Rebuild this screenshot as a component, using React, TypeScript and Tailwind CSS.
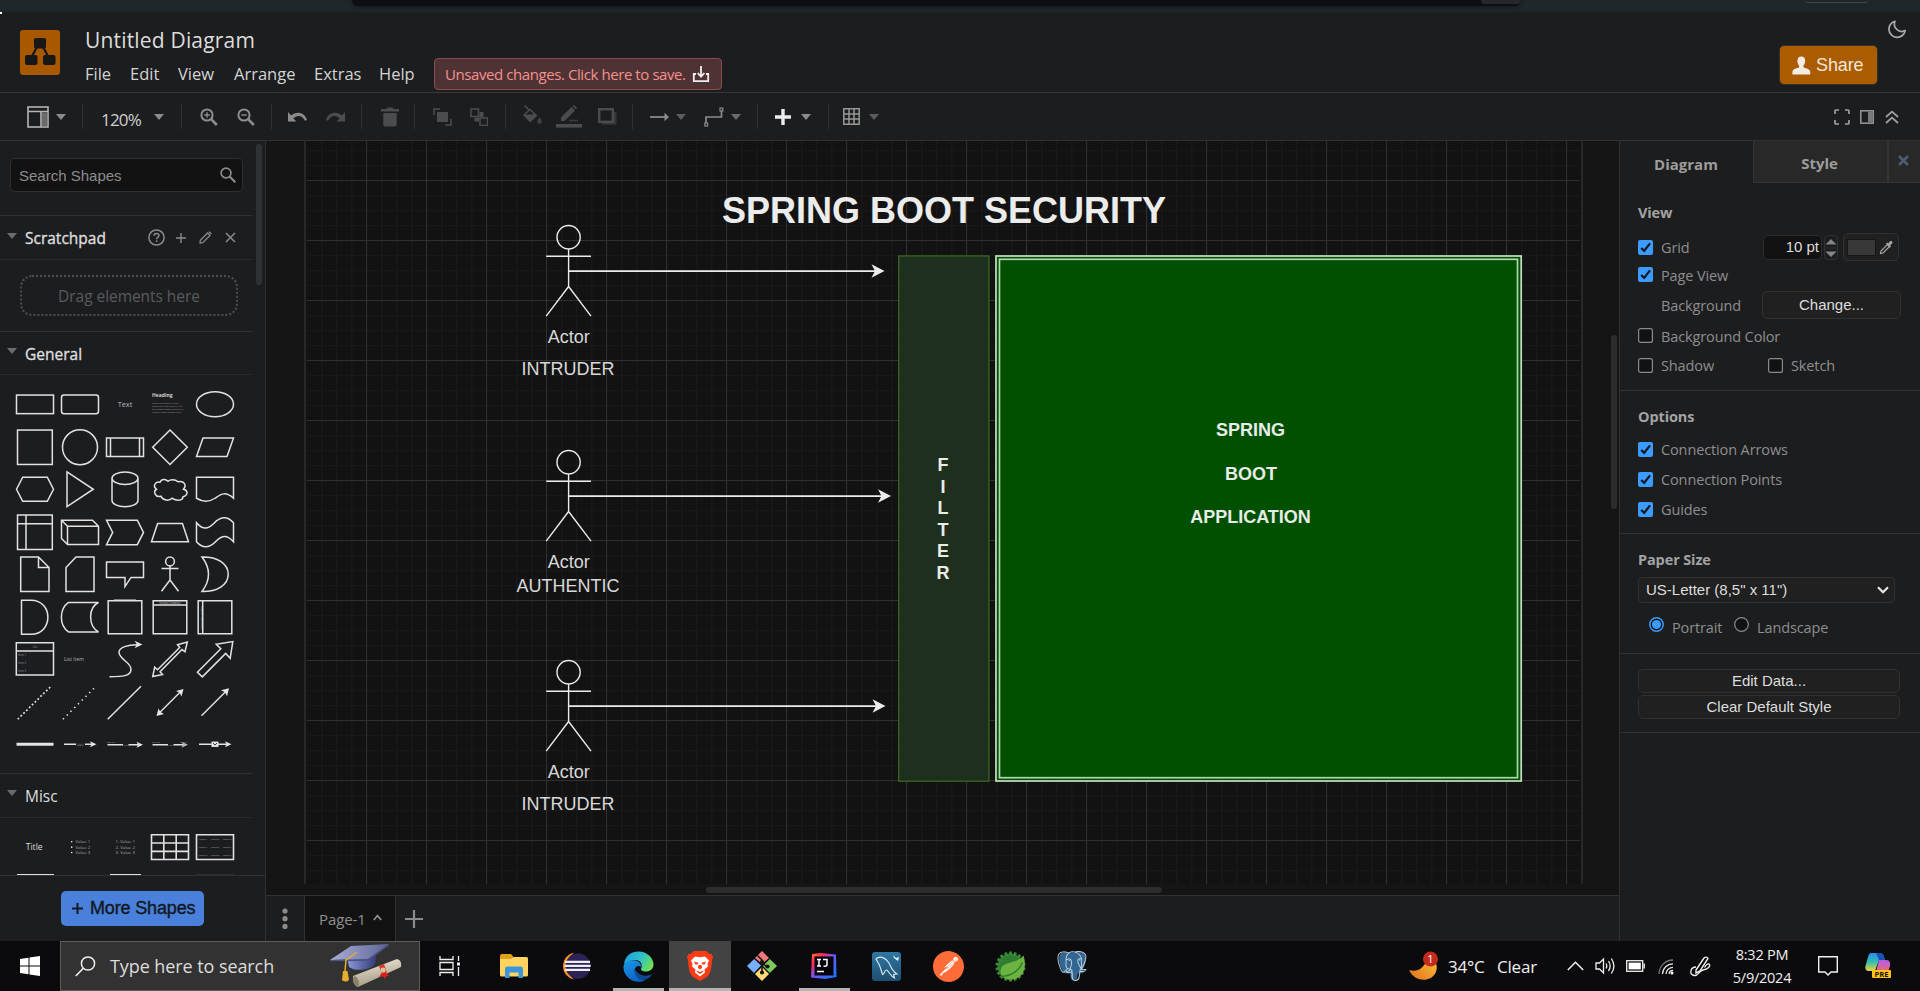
import React from "react";
import { SiPostman, SiPostgresql } from "react-icons/si";

const UI = "font-['Open_Sans','Noto_Sans',sans-serif]";
const ARIAL = "font-['Liberation_Sans',Arial,sans-serif]";

type SvgProps = { w: number; h: number; vb?: string; className?: string; children?: React.ReactNode };

function Svg({ w, h, vb, className = "", children }: SvgProps) {
  return (
    <svg width={w} height={h} viewBox={vb ?? `0 0 ${w} ${h}`} fill="none" className={`shrink-0 ${className}`}>
      {children}
    </svg>
  );
}

function Caret({ className = "", color = "#8b8b8b" }: { className?: string; color?: string }) {
  return (
    <Svg w={10} h={6} className={className}>
      <path d="M0 0H10L5 6Z" fill={color} />
    </Svg>
  );
}

function Sep({ className = "" }: { className?: string }) {
  return <div className={`h-[25px] w-px shrink-0 bg-[#303133] ${className}`} />;
}

/* ---------- header ---------- */

function Header() {
  return (
    <header className={`flex h-[81px] shrink-0 border-b border-[#37383a] ${UI}`}>
      <Svg w={40} h={45} className="mt-[18px] ml-5">
        <rect width="40" height="45" rx="3" fill="#a85900" />
        <path d="M17.5 16L11 28M22.5 16L29 28" stroke="#171717" strokeWidth="2.2" />
        <rect x="14" y="8" width="12" height="10.5" rx="2" fill="#171717" />
        <rect x="5" y="25" width="12.5" height="10" rx="2" fill="#171717" />
        <rect x="23" y="25" width="12.5" height="10" rx="2" fill="#171717" />
      </Svg>
      <div className="ml-[25px] flex flex-col">
        <div className="mt-[14px] h-[28px] text-[21px] leading-[28px] tracking-[0.18px] whitespace-nowrap text-[#dcdcdc]">
          Untitled Diagram
        </div>
        <div className="mt-[4px] flex h-[32px] items-center text-[16.5px] whitespace-nowrap text-[#d4d4d4]">
          <span className="w-[45px] pt-px">File</span>
          <span className="w-[48px] pt-px">Edit</span>
          <span className="w-[56px] pt-px">View</span>
          <span className="w-[80px] pt-px">Arrange</span>
          <span className="w-[65px] pt-px">Extras</span>
          <span className="w-[55px] pt-px">Help</span>
          <div className="flex h-[32px] w-[288px] items-center rounded border border-[#8a4c4f] bg-[#4f3233] pl-[10px] text-[15px] tracking-[-0.42px] text-[#f49190]">
            <span className="w-[247px]">Unsaved changes. Click here to save.</span>
            <Svg w={18} h={18}>
              <path d="M4 9H1.8V16.2H16.2V9H14" stroke="#f0f0f0" strokeWidth="1.8" />
              <path d="M9 1V11M5.6 8L9 11.6L12.4 8" stroke="#f0f0f0" strokeWidth="1.8" />
            </Svg>
          </div>
        </div>
      </div>
      <div className="ml-auto flex">
        <button className={`mt-[33px] flex h-[40px] w-[99px] items-center rounded-[5px] border border-[#33302a] bg-[#ab5b00] pl-[12px] text-[18px] tracking-[-0.1px] text-[#f0e6d8] ${ARIAL}`}>
          <Svg w={19} h={19}>
            <path d="M9.3 .5C12 .5 13.3 2.4 13.2 5 13.1 7.2 12.3 8.6 11.5 9.4V11.6C13.5 12.3 18.3 13 18.3 16V18.5H.4V16C.4 13 5.1 12.3 7.1 11.6V9.4C6.3 8.6 5.5 7.2 5.4 5 5.3 2.4 6.6 .5 9.3 .5Z" fill="#f4ece2" />
          </Svg>
          <span className="ml-[5px] pt-px">Share</span>
        </button>
        <Svg w={20} h={20} className="mt-[7px] mr-[13px] ml-[9px]">
          <path d="M8 2.2A8.2 8.2 0 1 0 18.2 11.6 7.4 7.4 0 0 1 8 2.2Z" stroke="#aaa" strokeWidth="1.7" strokeLinejoin="round" />
        </Svg>
      </div>
    </header>
  );
}

/* ---------- toolbar ---------- */

function ZoomIcon({ plus, className }: { plus?: boolean; className: string }) {
  return (
    <Svg w={18} h={18} className={className}>
      <circle cx="7" cy="7" r="5.6" stroke="#8e8e8e" strokeWidth="2" />
      <path d="M11.2 11.2L16.8 17" stroke="#8e8e8e" strokeWidth="2.6" />
      <path d={plus ? "M4.3 7H9.7M7 4.3V9.7" : "M4.3 7H9.7"} stroke="#8e8e8e" strokeWidth="1.4" />
    </Svg>
  );
}

function Toolbar() {
  const dim = "#4b4c4d";
  return (
    <div className={`flex h-[48px] shrink-0 items-center border-b border-[#303133] ${UI}`}>
      <Svg w={22} h={22} className="ml-[27px]">
        <rect x="1" y="1" width="20" height="20" stroke="#b5b5b5" strokeWidth="1.6" />
        <path d="M1 5.5H21M14 5.5V21" stroke="#b5b5b5" strokeWidth="1.6" />
        <rect x="15" y="6.3" width="5.2" height="14" fill="#6a6a6a" />
      </Svg>
      <Caret className="ml-[7px]" />
      <Sep className="ml-[16px]" />
      <span className="ml-[18px] w-[42px] pt-[7px] text-[17px] tracking-[-0.8px] text-[#d0d0d0]">120%</span>
      <Caret className="ml-[11px]" />
      <Sep className="ml-[17px]" />
      <ZoomIcon plus className="ml-[18px]" />
      <ZoomIcon className="ml-[19px]" />
      <Sep className="ml-[16px]" />
      <Svg w={19} h={14} className="ml-[16px]">
        <path d="M0 2L0 11.5H8.5L5.4 8.4C8 5.6 13.5 4.2 17 10.8L19 10C16.5 2.2 8.5 .8 3.2 5.6Z" fill="#8b8b8b" />
      </Svg>
      <Svg w={19} h={14} className="ml-[19px]">
        <path d="M19 2V11.5H10.5L13.6 8.4C11 5.6 5.5 4.2 2 10.8L0 10C2.5 2.2 10.5 .8 15.8 5.6Z" fill={dim} />
      </Svg>
      <Sep className="ml-[16px]" />
      <Svg w={18} h={20} className="ml-[19px]">
        <path d="M0 2H5.5L6.5 .5H11.5L12.5 2H18V4.5H0Z" fill={dim} />
        <path d="M2.3 6H15.7V17.5Q15.7 19.5 13.7 19.5H4.3Q2.3 19.5 2.3 17.5Z" fill={dim} />
      </Svg>
      <Sep className="ml-[15px]" />
      <Svg w={19} h={18} className="ml-[18px]">
        <path d="M7 1H1V7" stroke={dim} strokeWidth="1.6" />
        <path d="M12 17H18V11" stroke={dim} strokeWidth="1.6" />
        <path d="M4 4H15V14H4Z" fill={dim} />
      </Svg>
      <Svg w={18} h={18} className="ml-[18px]">
        <rect x="1" y="1" width="7.5" height="7.5" stroke={dim} strokeWidth="1.6" />
        <rect x="10" y="10" width="7.5" height="7.5" stroke={dim} strokeWidth="1.6" />
        <path d="M9.5 4H13.5V9H9V13.5H4.5V9.5H9.5Z" fill={dim} />
      </Svg>
      <Sep className="ml-[17px]" />
      <Svg w={21} h={20} className="mb-[3px] ml-[16px]">
        <path d="M1 10L8 3.5L15.500 10.500L8 17.500Z" fill={dim} />
        <path d="M2.500 .5L8 6V10" stroke={dim} strokeWidth="1.500" />
        <path d="M3.500 9.500L8 5.500L12 9.500Z" fill="#1c1d1f" />
        <path d="M17.5 12C19 14 20 15.5 20 16.500A2.4 2.4 0 0 1 15.2 16.500C15.2 15.500 16.2 14 17.5 12Z" fill="#3e3f40" />
      </Svg>
      <Svg w={26} h={23} className="ml-[13px]">
        <path d="M5 12.5L15.5 2L19 5.5L8.5 16H5Z" fill={dim} />
        <path d="M16.5 1L18 0L21 3L20 4.5Z" fill={dim} />
        <path d="M13 15.5H22" stroke="#3a3a3b" strokeWidth="1.6" />
        <rect y="19" width="26" height="3.6" fill={dim} />
      </Svg>
      <Svg w={19} h={17} className="ml-[16px]">
        <path d="M4 4H18.5V16.5H4Z" fill="#37383a" />
        <rect x="1.2" y="1.2" width="13.6" height="12.6" fill="#1c1d1f" stroke={dim} strokeWidth="2.4" />
      </Svg>
      <Sep className="ml-[15px]" />
      <Svg w={19} h={10} className="ml-[17px]">
        <path d="M0 5H15" stroke="#8b8b8b" strokeWidth="1.8" />
        <path d="M14.5 .8L19 5L14.5 9.2Z" fill="#8b8b8b" />
      </Svg>
      <Caret className="ml-[7px]" color="#5c5c5d" />
      <Svg w={20} h={20} className="ml-[18px]">
        <path d="M2 16V10H17.5V4" stroke="#8b8b8b" strokeWidth="1.7" />
        <rect x=".8" y="16" width="2.8" height="3" stroke="#8b8b8b" strokeWidth="1.2" />
        <rect x="16" y="1" width="2.8" height="3" stroke="#8b8b8b" strokeWidth="1.2" />
      </Svg>
      <Caret className="ml-[7px]" color="#6a6a6b" />
      <Sep className="ml-[16px]" />
      <Svg w={16} h={16} className="ml-[17px]">
        <path d="M0 8H16M8 0V16" stroke="#ececec" strokeWidth="3.4" />
      </Svg>
      <Caret className="ml-[10px]" />
      <Sep className="ml-[17px]" />
      <Svg w={17} h={17} className="ml-[14px]">
        <path d="M.8 .8H16.2V16.2H.8ZM6 .8V16.2M11 .8V16.2M.8 6H16.2M.8 11H16.2" stroke="#989898" strokeWidth="1.5" />
      </Svg>
      <Caret className="ml-[9px]" color="#5c5c5d" />
      <Svg w={16} h={16} className="ml-auto">
        <path d="M1 5V2Q1 1 2 1H5M11 1H14Q15 1 15 2V5M15 11V14Q15 15 14 15H11M5 15H2Q1 15 1 14V11" stroke="#a0a0a0" strokeWidth="1.7" />
      </Svg>
      <Svg w={14} h={14} className="ml-[10px]">
        <rect x=".8" y=".8" width="12.4" height="12.4" stroke="#989898" strokeWidth="1.5" />
        <rect x="8" y="1.4" width="4.6" height="11.2" fill="#7a7a7a" />
      </Svg>
      <Svg w={14} h={14} className="mr-[21px] ml-[11px]">
        <path d="M1 7L7 1.6L13 7M1 13L7 7.6L13 13" stroke="#a0a0a0" strokeWidth="1.8" />
      </Svg>
    </div>
  );
}

/* ---------- shape palette ---------- */

const S = { stroke: "#e2e2e2", strokeWidth: 1.5, fill: "none" } as const;

const generalShapes: React.ReactNode[] = [
  <rect x="-18.5" y="-9.2" width="37" height="18.6" {...S} />,
  <rect x="-18.5" y="-9.2" width="37" height="18.6" rx="2.5" {...S} />,
  <text textAnchor="middle" y="2.6" fontSize="7.4" fill="#b8b8b8">Text</text>,
  <g fill="#9a9a9a">
    <text x="-18" y="-7" fontSize="5" fontWeight="bold" fill="#d0d0d0">Heading</text>
    <text x="-18" y="0" fontSize="2.1">Lorem ipsum dolor sit amet,</text>
    <text x="-18" y="3.1" fontSize="2.1">consectetur adipisicing elit, sed</text>
    <text x="-18" y="6.2" fontSize="2.1">do eiusmod tempor incididunt ut</text>
    <text x="-18" y="9.2" fontSize="2.1">labore et dolore magna aliqua.</text>
  </g>,
  <ellipse rx="18.5" ry="12.4" {...S} />,
  <rect x="-17.5" y="-17.2" width="34.8" height="34.4" {...S} />,
  <circle r="17.5" {...S} />,
  <path d="M-18.5 -9.3H18.5V9.3H-18.5ZM-14.5 -9.3V9.3M14.5 -9.3V9.3" {...S} />,
  <path d="M0 -17.3L17.3 0L0 17.3L-17.3 0Z" {...S} />,
  <path d="M-18.5 9.3L-12 -9.2H18.5L12 9.3Z" {...S} />,
  <path d="M-18.5 0L-12.3 -12H12.3L18.5 0L12.3 12H-12.3Z" {...S} />,
  <path d="M-13 -17.3L13.3 0L-13 17.3Z" {...S} />,
  <path d="M-13 -11A13 6.2 0 0 1 13 -11V11.3A13 6.2 0 0 1 -13 11.3ZM-13 -11A13 6.2 0 0 0 13 -11" {...S} />,
  <path d="M-10 -7C-15 -8 -17.5 -3 -13.5 0C-17 2 -15 8.5 -9 7C-7 11.5 -1 12 2 9C8 12.5 13 11 13 7.5C18.5 6 18 1 13.5 0C17 -4 14 -9 8 -7.5C5 -10.5 0 -10 -2 -8C-5 -11 -9 -10 -10 -7Z" {...S} />,
  <path d="M-18.5 -12H18.5V9C10 1.5 6 5 0 9C-6 13 -12 13 -18.5 9Z" {...S} />,
  <path d="M-17.5 -17.3H17.3V17.3H-17.5ZM-9 -17.3V17.3M-17.5 -8.6H17.3" {...S} />,
  <path d="M-18.5 -12H12.5L18.5 -6V12.3H-12.5L-18.5 6.3ZM-12.5 12.3V-6H18.5M-12.5 -6L-18.5 -12" {...S} />,
  <path d="M-18.5 -12H12.3L18.5 .2L12.3 12.4H-18.5L-12.3 .2Z" {...S} />,
  <path d="M-18.5 9.4L-12.4 -8.8H12.4L18.5 9.4Z" {...S} />,
  <path d="M-18.5 -9.5C-12 -2 -7 -3 -1 -9C5 -15.5 12 -17 18.5 -9.5V9.5C12 2 7 3 1 9C-5 15.5 -12 17 -18.5 9.5Z" {...S} />,
  <path d="M-14.3 -17.3H3.5L14 -6.8V17.3H-14.3ZM3.5 -17.3V-6.8H14" {...S} />,
  <path d="M-4 -17.3H14V17.3H-14V-6.8Z" {...S} />,
  <path d="M-18.5 -12.3H18.5V3.2H6L0 12.3V3.2H-18.5Z" {...S} />,
  <g {...S}>
    <circle cy="-12.8" r="4.4" />
    <path d="M-8.5 -5.7H8.5M0 -8.4V5.8M-8.5 17L0 5.8L8.5 17" />
  </g>,
  <path d="M-13 -17.2C2 -17.5 13.2 -11 13.2 0C13.2 11 2 17.5 -13 17.3C-4.5 6 -4.5 -6 -13 -17.2Z" {...S} />,
  <path d="M-13.5 -17H-4C18.5 -17 18.5 17 -4 17H-13.5Z" {...S} />,
  <path d="M-11.5 -14.8H18.5C8 -10 8 9 18.5 14.7H-11.5C-21 8 -21 -8 -11.5 -14.8Z" {...S} />,
  <path d="M-16.8 -16.5H16.8V16.6H-16.8ZM-11 -17.1H11" {...S} />,
  <g>
    <path d="M-16.8 -16.5H16.8V16.6H-16.8ZM-16.8 -12.3H16.8" {...S} />
    <text textAnchor="middle" y="-13.4" fontSize="2.6" fill="#ccc">Vertical Container</text>
  </g>,
  <g>
    <path d="M-16.8 -16.5H16.8V16.6H-16.8ZM-12.3 -16.5V16.6" {...S} />
    <text textAnchor="middle" transform="rotate(-90)" y="-13.4" fontSize="2.4" fill="#ccc">Horizontal Container</text>
  </g>,
  <g fill="#9a9a9a" fontSize="2.7">
    <path d="M-18.7 -16.4H18.5V15.8H-18.7ZM-18.7 -8.2H18.5" {...S} />
    <text textAnchor="middle" y="-11.3">List</text>
    <text x="-17" y="-3.5">Item 1</text>
    <text x="-17" y="4.5">Item 2</text>
    <text x="-17" y="12.5">Item 3</text>
  </g>,
  <text x="-16" y="1.8" fontSize="5" fill="#b5b5b5">List Item</text>,
  <g>
    <path d="M-15.5 17.5C-3 17.5 6 17 6 10C6 3 -6 0 -6 -7C-6 -12 3 -14.5 12 -14.6" {...S} />
    <path d="M17.5 -14.7L9.5 -18.5L12 -14.7L9.5 -11Z" fill="#e6e6e6" />
  </g>,
  <path d="M-17.3 17.3L-15.3 8L-12.5 10.5L9.7 -11.7L7.5 -14.5L17.3 -17.3L15 -7.5L12 -9.7L-10 12.5L-7.5 15.2Z" {...S} />,
  <path d="M-17.6 13L5.8 -10.5L1.2 -15L17.8 -17.7L15.2 -1L10.7 -5.8L-12.7 17.6Z" {...S} />,
  <path d="M-17.3 17L16 -16" {...S} strokeWidth="1.7" strokeDasharray="1.8 2.2" />,
  <path d="M-17 17L15 -15" {...S} strokeWidth="1.7" strokeDasharray="1.4 3.9" />,
  <path d="M-17.3 17L16 -16" {...S} />,
  <g>
    <path d="M-11 11L11 -11" {...S} />
    <path d="M-13.5 13.8L-11.5 6.2L-9.6 9.8L-6 11.8ZM13.5 -13.3L11.5 -5.8L9.6 -9.4L6 -11.3Z" fill="#e6e6e6" />
  </g>,
  <g>
    <path d="M-13.5 13.5L11 -11" {...S} />
    <path d="M14 -14L12 -6L10 -10L6 -12Z" fill="#e6e6e6" />
  </g>,
  <path d="M-18.5 0H18.5" stroke="#e4e4e4" strokeWidth="3" />,
  <g>
    <path d="M-16 0H-4M5 0H12" {...S} />
    <path d="M16.5 0L10 -3L11.5 0L10 3Z" fill="#e6e6e6" />
    <text x="-3.5" y="1.4" fontSize="2.8" fill="#999">Label</text>
  </g>,
  <g fill="#999" fontSize="2.5">
    <path d="M-17.5 .5H-2M3.5 .5H13" {...S} />
    <path d="M18 .5L11.5 -2.5L13 .5L11.5 3.5Z" fill="#e6e6e6" />
    <text x="-18" y="-1">Source</text>
    <text x="-2" y="1.7">Label</text>
  </g>,
  <g fill="#999" fontSize="2.5">
    <path d="M-17.5 .5H-2M3.5 .5H13" {...S} />
    <path d="M18 .5L11.5 -2.5L13 .5L11.5 3.5Z" fill="#b6b6b6" />
    <text x="-18" y="-1">Source</text>
    <text x="-2" y="1.7">Label</text>
    <text x="10" y="-1">Target</text>
  </g>,
  <g>
    <path d="M-16 0H12" {...S} />
    <path d="M16.5 0L10 -3L11.5 0L10 3Z" fill="#e6e6e6" />
    <rect x="-3.5" y="-2.7" width="7" height="5.4" fill="#e6e6e6" />
    <path d="M-2 -1.2L0 .8L2 -1.2" stroke="#1c1d1f" strokeWidth=".9" fill="none" />
  </g>,
];

const cells3 = [-11.9, 0, 11.9];

const miscShapes: React.ReactNode[] = [
  <text textAnchor="middle" x="-.8" y="2.6" fontSize="8.6" fill="#dcdcdc">Title</text>,
  <g fontSize="4.3" fill="#a8a8a8">
    {[0, 1, 2].map((i) => (
      <g key={i}>
        <circle cx="-8.3" cy={-5.5 + i * 5.4} r=".8" fill="#eee" />
        <text x="-4.5" y={-4 + i * 5.4}>{`Value ${i + 1}`}</text>
      </g>
    ))}
  </g>,
  <g fontSize="4.3" fill="#a8a8a8">
    {[0, 1, 2].map((i) => (
      <text key={i} x="-9.5" y={-4 + i * 5.4}>{`${i + 1}. Value ${i + 1}`}</text>
    ))}
  </g>,
  <path d="M-18.5 -12.5H18.5V12.3H-18.5ZM-6.2 -12.5V12.3M6.2 -12.5V12.3M-18.5 -4.2H18.5M-18.5 4.1H18.5" {...S} strokeWidth="1.6" />,
  <g fontSize="2.5" fill="#b0b0b0" textAnchor="middle">
    <path d="M-18.5 -12.5H18.5V12.3H-18.5Z" {...S} strokeWidth="1.6" />
    {cells3.map((x, c) => [-7.5, .7, 8.7].map((y, r) => <text key={`${c}${r}`} x={x} y={y}>{`Value ${r * 3 + c + 1}`}</text>))}
  </g>,
];

function Palette({ items }: { items: React.ReactNode[] }) {
  return (
    <div className="ml-[13px] grid w-[225px] grid-cols-5">
      {items.map((s, i) => (
        <svg key={i} width="45" height="42.5" viewBox="-22 -21.25 45 42.5" className={`${UI} block`}>
          {s}
        </svg>
      ))}
    </div>
  );
}

function SectionTitle({ children, className, bold, tools }: { children: string; className: string; bold?: boolean; tools?: React.ReactNode }) {
  return (
    <div className={`flex w-[253px] items-center border-b border-[#28292b] ${className}`}>
      <Caret className="-mt-1 ml-[7px]" color="#6c6c6d" />
      <span className={`ml-[8px] pt-[3px] text-[15.5px] text-[#dedede] ${bold ? "[-webkit-text-stroke:0.35px_#dedede]" : ""}`}>{children}</span>
      {tools}
    </div>
  );
}

function ScratchpadTools() {
  return (
    <div className="mr-[17px] ml-auto flex items-center">
      <Svg w={17} h={17}>
        <circle cx="8.5" cy="8.5" r="7.6" stroke="#8a8a8a" strokeWidth="1.5" />
        <path d="M6 6.8Q6 4.4 8.5 4.4T11 6.6C11 8.2 8.6 8.2 8.6 10.3" stroke="#8a8a8a" strokeWidth="1.5" />
        <rect x="7.8" y="11.4" width="1.6" height="1.6" fill="#8a8a8a" />
      </Svg>
      <Svg w={10} h={10} className="ml-[11px]">
        <path d="M0 5H10M5 0V10" stroke="#8a8a8a" strokeWidth="1.4" />
      </Svg>
      <Svg w={13} h={13} className="ml-[13px]">
        <path d="M1 12L1.3 9.3L8.6 2L11 4.4L3.7 11.7Z" stroke="#8a8a8a" strokeWidth="1.3" />
        <path d="M9.5 1.2L10.6 .2L12.8 2.4L11.8 3.5Z" fill="#8a8a8a" />
      </Svg>
      <Svg w={11} h={11} className="ml-[13px]">
        <path d="M1 1L10 10M10 1L1 10" stroke="#8a8a8a" strokeWidth="1.5" />
      </Svg>
    </div>
  );
}

function Sidebar() {
  return (
    <aside className={`flex w-[266px] shrink-0 flex-col border-r border-[#303133] ${UI}`}>
      <div className="flex h-[734px] shrink-0 overflow-hidden">
        <div className="w-[253px]">
          <div className={`mt-[17px] ml-[10px] flex h-[34px] w-[233px] items-center rounded-[5px] border border-[#2f3032] bg-[#121212] pl-[8px] text-[15px] tracking-[0px] text-[#8c8c8c] ${ARIAL}`}>
            <span className="pt-[2px]">Search Shapes</span>
            <Svg w={16} h={16} className="mr-[6px] ml-auto">
              <circle cx="6" cy="6" r="4.9" stroke="#8c8c8c" strokeWidth="1.7" />
              <path d="M9.6 9.6L15.3 15.3" stroke="#8c8c8c" strokeWidth="2.1" />
            </Svg>
          </div>
          <div className="mt-[23px] h-px bg-[#2e2f31]" />
          <SectionTitle className="h-[44px]" bold tools={<ScratchpadTools />}>Scratchpad</SectionTitle>
          <div className="mt-[15px] ml-[20px] flex h-[41px] w-[218px] items-center justify-center rounded-[12px] border-2 border-dotted border-[#4c4d4e] pt-[2px] text-[15.5px] tracking-[-0.05px] text-[#5a5b5c]">
            Drag elements here
          </div>
          <div className="mt-[15px] h-px bg-[#2e2f31]" />
          <SectionTitle className="h-[43px]" bold>General</SectionTitle>
          <div className="h-[8px]" />
          <Palette items={generalShapes} />
          <div className="mt-[7px] h-px bg-[#2e2f31]" />
          <SectionTitle className="h-[44px]">Misc</SectionTitle>
          <div className="h-[8px]" />
          <Palette items={miscShapes} />
          <div className="mt-[6px] ml-[17px] flex">
            <div className="h-[2px] w-[37px] bg-[#e0e0e0]" />
            <div className="ml-[56px] h-[2px] w-[31px] bg-[#e0e0e0]" />
            <div className="ml-[55px] h-[2px] w-[38px] bg-[#2c2d2f]" />
          </div>
        </div>
        <div className="mt-[3px] ml-[3px] h-[141px] w-[6px] rounded-full bg-[#303133]" />
      </div>
      <div className="flex flex-1 border-t border-[#303133]">
        <button className={`mt-[15px] ml-[61px] flex h-[35px] w-[143px] items-center rounded-[5px] bg-[#4980db] pb-px text-[18px] tracking-[-0.15px] text-[#14181f] [-webkit-text-stroke:0.4px_#14181f] ${ARIAL}`}>
          <Svg w={11} h={11} className="ml-[11px]">
            <path d="M0 5.5H11M5.5 0V11" stroke="#14181f" strokeWidth="2" />
          </Svg>
          <span className="ml-[7px]">More Shapes</span>
        </button>
      </div>
    </aside>
  );
}

/* ---------- diagram canvas ---------- */

function Actor({ dy, label, labelY, arrowTo }: { dy: number; label: string; labelY: number; arrowTo: number }) {
  return (
    <g transform={`translate(0 ${dy})`}>
      <g stroke="#ececec" strokeWidth="1.4" fill="none">
        <ellipse cx="568.6" cy="237.2" rx="11.6" ry="11.7" />
        <path d="M568.6 249V286.5M546.2 256.2H591M546.2 316.2L568.6 286.5L591 316.2" />
        <path d={`M568.5 271.2H${arrowTo - 9}`} strokeWidth="1.7" />
      </g>
      <path d={`M${arrowTo} 271L${arrowTo - 13} 264.3L${arrowTo - 9.5} 271L${arrowTo - 13} 277.7Z`} fill="#ececec" />
      <g fill="#d8d8d8" fontSize="18" textAnchor="middle">
        <text x="568.7" y="342.8">Actor</text>
        <text x="568" y={labelY}>{label}</text>
      </g>
    </g>
  );
}

function Canvas() {
  return (
    <main className="flex w-[1353px] flex-col bg-[#151515]">
      <svg width="1353" height="754" viewBox="266 141 1353 754" className={`block shrink-0 ${ARIAL}`}>
        <defs>
          <pattern id="minor" x="306" y="180" width="15" height="15" patternUnits="userSpaceOnUse">
            <path d="M.5 0V15M0 .5H15" stroke="#181818" strokeWidth="1.6" />
          </pattern>
          <pattern id="major" x="306" y="180" width="60" height="60" patternUnits="userSpaceOnUse">
            <path d="M.5 0V60M0 .5H60" stroke="#2f2f2f" />
          </pattern>
        </defs>
        <rect x="305" y="141" width="1277" height="743" fill="#121212" />
        <rect x="307" y="141" width="1273" height="743" fill="url(#minor)" />
        <rect x="307" y="141" width="1273" height="743" fill="url(#major)" />
        <path d="M305 141V884M1582 141V884" stroke="#2b2b2b" strokeWidth="1.8" />

        <text x="944" y="222.6" textAnchor="middle" fontSize="36" fontWeight="bold" fill="#ececec">SPRING BOOT SECURITY</text>

        <rect x="898.7" y="255.9" width="90.2" height="525.3" fill="#1f2f1e" stroke="#376320" strokeWidth="1.4" />
        <rect x="995" y="255" width="527" height="526.8" fill="#005000" />
        <rect x="996" y="256" width="525.2" height="525" fill="none" stroke="#c4dcc4" strokeWidth="1.7" />
        <rect x="999.5" y="259.3" width="518" height="518.4" fill="none" stroke="#b4d2b4" strokeWidth="1.7" />

        <g fontSize="18" fontWeight="bold" fill="#e8ede8" textAnchor="middle">
          {"FILTER".split("").map((ch, i) => (
            <text key={i} x="943" y={471 + i * 21.6}>{ch}</text>
          ))}
          <text x="1250.5" y="436">SPRING</text>
          <text x="1251" y="480">BOOT</text>
          <text x="1250.5" y="522.6">APPLICATION</text>
        </g>

        <Actor dy={0} label="INTRUDER" labelY={374.8} arrowTo={884.5} />
        <Actor dy={225} label="AUTHENTIC" labelY={366.8} arrowTo={891} />
        <Actor dy={435} label="INTRUDER" labelY={374.8} arrowTo={885.5} />

        <rect x="1611" y="335" width="6" height="174" rx="3" fill="#2d2d2d" />
        <rect x="706" y="887" width="456" height="6" rx="3" fill="#2d2d2d" />
      </svg>
      <div className={`flex flex-1 items-stretch border-t border-[#303133] bg-[#1c1d1f] ${UI}`}>
        <div className="flex w-[39px] items-center justify-center border-r border-[#303133]">
          <Svg w={6} h={22}>
            <g fill="#8b8b8b">
              <circle cx="3" cy="3" r="2.6" />
              <circle cx="3" cy="10.7" r="2.6" />
              <circle cx="3" cy="18.4" r="2.6" />
            </g>
          </Svg>
        </div>
        <div className="flex w-[91px] items-center border-r border-[#303133] bg-[#121212] pl-[14px] text-[15px] tracking-[-0.1px] text-[#8f8f8f]">
          <span className="w-[54px] pt-[2px]">Page-1</span>
          <Svg w={9} h={7} className="-mt-[2px]">
            <path d="M.8 6L4.5 1.6L8.2 6" stroke="#8f8f8f" strokeWidth="1.7" />
          </Svg>
        </div>
        <Svg w={18} h={18} className="ml-[9px] self-center">
          <path d="M0 9H18M9 0V18" stroke="#8b8b8b" strokeWidth="2.2" />
        </Svg>
      </div>
    </main>
  );
}

/* ---------- format panel ---------- */

function Check({ on }: { on?: boolean }) {
  return on ? (
    <Svg w={15} h={15}>
      <rect width="15" height="15" rx="2" fill="#3b9bff" />
      <path d="M3.2 8L6.2 10.9L12 3.4" stroke="#15171a" strokeWidth="2.2" />
    </Svg>
  ) : (
    <Svg w={15} h={15}>
      <rect x=".6" y=".6" width="13.8" height="13.8" rx="2" fill="#121212" stroke="#8a8a8a" strokeWidth="1.2" />
    </Svg>
  );
}

function CheckRow({ label, on, className = "h-[30px]", pad = "pt-px" }: { label: string; on?: boolean; className?: string; pad?: string }) {
  return (
    <div className={`flex items-center ${className}`}>
      <Check on={on} />
      <span className={`ml-[8px] ${pad}`}>{label}</span>
    </div>
  );
}

function PanelHeading({ children }: { children: string }) {
  return <div className="flex h-[24px] items-center pt-[2px] font-bold text-[#a3a3a3]">{children}</div>;
}

function FormatPanel() {
  const btn = `flex items-center justify-center rounded-[5px] border border-[#303133] bg-[#202020] pt-px text-[15px] tracking-[0px] text-[#dedede] ${ARIAL}`;
  return (
    <aside className={`flex w-[301px] shrink-0 flex-col border-l border-[#303133] text-[14.5px] tracking-[-0.12px] text-[#8e8e8e] ${UI}`}>
      <div className="flex h-[42px] text-[15px] font-bold tracking-[0px] text-[#9c9c9c]">
        <div className="flex w-[133px] items-center justify-center pt-[4px] pr-px">Diagram</div>
        <div className="flex w-[134px] items-center justify-center border-b border-l border-[#333436] bg-[#282828] pt-[3px] pr-[2px]">Style</div>
        <div className="flex flex-1 justify-center border-b border-l-2 border-[#333436] bg-[#282828] pt-[14px]">
          <Svg w={11} h={11} className="mr-[2px]">
            <path d="M1 1L10 10M10 1L1 10" stroke="#4c5e74" strokeWidth="2.6" />
          </Svg>
        </div>
      </div>

      <section className="border-b border-[#303133] pt-[17px] pb-[10px] pl-[18px]">
        <PanelHeading>View</PanelHeading>
        <div className="mt-[8px] flex h-[30px] items-center">
          <CheckRow label="Grid" on className="h-[30px] w-[125px]" pad="pt-[2px]" />
          <div className={`flex h-[25px] w-[59px] items-center justify-end rounded-[5px] border border-[#2b2c2e] bg-[#121212] pt-px pr-[2px] text-[15px] tracking-[0px] text-[#dedede] ${ARIAL}`}>10 pt</div>
          <div className="ml-[2px] flex h-[25px] w-[14px] flex-col items-center justify-center rounded-[4px] border border-[#303133]">
            <Svg w={12} h={23}>
              <path d="M.5 8.500L6 3L11.500 8.500ZM.5 15.500L6 21L11.500 15.500Z" fill="#858585" />
              <path d="M0 12H12" stroke="#303133" />
            </Svg>
          </div>
          <div className="ml-[5px] flex h-[28px] w-[56px] items-center rounded-[5px] border border-[#303133] bg-[#202020] pl-[3px]">
            <div className="h-[17px] w-[29px] border border-[#161616] bg-[#383838]" />
            <Svg w={14} h={15} className="ml-[3px]">
              <path d="M1.5 13.5L2 11L8.3 4.7L10.3 6.7L4 13Z" stroke="#a6a6a6" strokeWidth="1.2" />
              <path d="M7 3.4L8.2 2.6L9.2 3.6L11 1.2Q12 .3 13 1.4T13 3.6L11.2 5.6L12 6.6L11 7.7Z" fill="#a6a6a6" />
            </Svg>
          </div>
        </div>
        <CheckRow label="Page View" on className="h-[25px]" pad="pt-[2px]" />
        <div className="mt-[3px] flex h-[29px] items-center">
          <span className="ml-[23px] w-[101px] pt-[2px]">Background</span>
          <button className={`h-[28px] w-[139px] ${btn}`}>Change...</button>
        </div>
        <CheckRow label="Background Color" className="mt-px h-[30px]" pad="pt-[3px]" />
        <div className="flex h-[30px]">
          <CheckRow label="Shadow" className="w-[130px]" pad="pt-[2px]" />
          <CheckRow label="Sketch" className="" pad="pt-[2px]" />
        </div>
      </section>

      <section className="border-b border-[#303133] pt-[13px] pb-[9px] pl-[18px]">
        <PanelHeading>Options</PanelHeading>
        <div className="h-[6px]" />
        <CheckRow label="Connection Arrows" on />
        <CheckRow label="Connection Points" on />
        <CheckRow label="Guides" on />
      </section>

      <section className="border-b border-[#303133] pt-[13px] pb-[14px] pl-[18px]">
        <PanelHeading>Paper Size</PanelHeading>
        <div className={`mt-[6px] flex h-[26px] w-[257px] items-center rounded-[4px] border border-[#303133] bg-[#202020] pl-[7px] text-[15px] tracking-[0px] text-[#dedede] ${ARIAL}`}>
          US-Letter (8,5&quot; x 11&quot;)
          <Svg w={12} h={8} className="mr-[5px] ml-auto">
            <path d="M1 1.2L6 6.2L11 1.2" stroke="#e8e8e8" strokeWidth="2.2" />
          </Svg>
        </div>
        <div className="mt-[6px] flex h-[30px] items-center pl-[11px]">
          <Svg w={15} h={15}>
            <circle cx="7.5" cy="7.5" r="6.7" fill="#121212" stroke="#3b9bff" strokeWidth="1.5" />
            <circle cx="7.5" cy="7.5" r="4.6" fill="#3b9bff" />
          </Svg>
          <span className="ml-[8px] w-[62px] pt-[8px]">Portrait</span>
          <Svg w={15} h={15}>
            <circle cx="7.5" cy="7.5" r="6.8" fill="#121212" stroke="#8a8a8a" strokeWidth="1.2" />
          </Svg>
          <span className="ml-[8px] pt-[8px]">Landscape</span>
        </div>
      </section>

      <section className="flex flex-col gap-[2px] border-b border-[#303133] pt-[15px] pb-[13px] pl-[18px]">
        <button className={`h-[24px] w-[262px] ${btn}`}>Edit Data...</button>
        <button className={`h-[24px] w-[262px] ${btn}`}>Clear Default Style</button>
      </section>
    </aside>
  );
}

/* ---------- taskbar ---------- */

function TaskSlot({ children, active, open }: { children: React.ReactNode; active?: boolean; open?: boolean }) {
  return (
    <div className={`relative flex h-[50px] w-[62px] items-center justify-center ${active ? "bg-[#434344]" : ""}`}>
      {children}
      {(active || open) && <div className={`absolute bottom-0 h-[3px] bg-[#b5b2b2] ${active ? "w-[62px]" : "w-[51px]"}`} />}
    </div>
  );
}

function Graduation() {
  return (
    <Svg w={74} h={46} className="ml-auto mr-[16px]">
      <defs>
        <linearGradient id="cap" x1="0" x2="1">
          <stop offset="0" stopColor="#a9afd6" />
          <stop offset="1" stopColor="#5d6395" />
        </linearGradient>
        <linearGradient id="capb" x1="0" x2="1">
          <stop offset="0" stopColor="#8c9add" />
          <stop offset="1" stopColor="#343c78" />
        </linearGradient>
        <linearGradient id="scroll" x1="0" y1="0" x2=".3" y2="1">
          <stop offset="0" stopColor="#f5efdf" />
          <stop offset="1" stopColor="#a39a84" />
        </linearGradient>
      </defs>
      <path d="M18 14L46 8Q48 18 46 21C41 27 27 29 20 24Z" fill="url(#capb)" />
      <path d="M1 17L22 3L60 1L39 16Z" fill="url(#cap)" />
      <path d="M1 17L39 16L60 1L60 2.4L39 18L1 18.3Z" fill="#4c5283" />
      <path d="M28 9L17 17L16 28" stroke="#e2ae2c" strokeWidth="1.5" />
      <path d="M14 28H18.5L20 37Q16.5 40 13 37Z" fill="#e7b02a" />
      <path d="M24 33L68 16Q73 17 72 24L29 44Q23 41 24 33Z" fill="url(#scroll)" />
      <ellipse cx="27" cy="38.5" rx="2.6" ry="5.4" transform="rotate(-18 27 38.5)" fill="#8c826c" />
      <path d="M50 23L55 21L58 30L53 32Z" fill="#d9362f" />
      <path d="M52 31L50 34L54 33.5L57 36L57 33L60 33L56 29Z" fill="#d8201f" />
      <circle cx="54" cy="27" r="2.6" fill="#d8c49a" />
    </Svg>
  );
}

function GearLeaf() {
  const teeth = Array.from({ length: 18 }, (_, i) => i * 20);
  return (
    <Svg w={31} h={31} vb="-15.5 -15.5 31 31">
      <circle r="13" fill="#2f7d32" />
      {teeth.map((a) => (
        <rect key={a} x="-1.4" y="-15" width="2.8" height="4" fill="#3b8a38" transform={`rotate(${a})`} />
      ))}
      <path d="M13 -11C16 -2 15 12 1 13C-8 13.5 -12 7 -9 1C-6 -5 7 -3 13 -11Z" fill="#6db33f" />
      <path d="M-11 10C0 10 8 5 12 -4" stroke="#2f7d32" strokeWidth="1.5" />
    </Svg>
  );
}

function Taskbar() {
  return (
    <footer className={`flex h-[50px] shrink-0 items-center bg-[#0b0b0d] whitespace-nowrap text-[#f0f0f0] ${UI}`}>
      <Svg w={20} h={20} className="mr-[20px] ml-[20px]">
        <path d="M0 3L8.5 1.8V9.5H0ZM9.5 1.6L20 0V9.5H9.5ZM0 10.5H8.5V18.2L0 17ZM9.5 10.5H20V20L9.5 18.4Z" fill="#fff" />
      </Svg>
      <div className="flex h-[50px] w-[360px] items-center border border-[#5c5c5c] bg-[#323232]">
        <Svg w={21} h={21} className="ml-[14px]">
          <circle cx="13" cy="7.5" r="6.6" stroke="#f0f0f0" strokeWidth="1.5" />
          <path d="M8.3 12.3L.8 20" stroke="#f0f0f0" strokeWidth="1.6" />
        </Svg>
        <span className="ml-[14px] text-[18px] tracking-[-0.08px] text-[#dcdcdc]">Type here to search</span>
        <Graduation />
      </div>
      <div className="flex w-[63px] justify-center pr-[3px]">
        <Svg w={22} h={20}>
          <path d="M1 0V3.5H14V0M1 20V16.5H14V20M1 6.5H14V13.5H1ZM19.5 0V5M19.5 11V20" stroke="#f0f0f0" strokeWidth="1.3" />
          <rect x="18" y="6.5" width="3" height="3" fill="#f0f0f0" />
        </Svg>
      </div>
      <TaskSlot>
        <Svg w={28} h={24}>
          <path d="M0 2Q0 0 2 0H11L13.5 3H26V8H0Z" fill="#e2a11b" />
          <path d="M0 5H11L14 3H26.5Q28 3 28 4.5V21Q28 22.5 26.5 22.5H1.5Q0 22.5 0 21Z" fill="#ffd45e" />
          <path d="M5 24V15Q5 12.5 7.5 12.5H20.5Q23 12.5 23 15V24H18.5V18.5H9.5V24Z" fill="#3b95dc" />
        </Svg>
      </TaskSlot>
      <TaskSlot>
        <Svg w={30} h={28}>
          <path d="M13 .5A14 13.8 0 0 0 13 27.5A18 18 0 0 1 13 .5Z" fill="#f7941e" />
          <ellipse cx="17" cy="14" rx="12.5" ry="12.8" fill="#2c2255" />
          <path d="M4 9.8H29M3.6 13.8H29.6M4 17.8H29" stroke="#eeeef6" strokeWidth="2.2" />
        </Svg>
      </TaskSlot>
      <TaskSlot open>
        <Svg w={31} h={31}>
          <defs>
            <linearGradient id="e1" x1="0" y1=".2" x2="1" y2=".6">
              <stop offset="0" stopColor="#1f9de0" />
              <stop offset=".55" stopColor="#2fc2c9" />
              <stop offset="1" stopColor="#6fe04e" />
            </linearGradient>
            <linearGradient id="e2" x1="0" y1="0" x2=".6" y2="1">
              <stop offset="0" stopColor="#1a9be8" />
              <stop offset="1" stopColor="#0b5fc0" />
            </linearGradient>
          </defs>
          <path d="M1 13C2 5 8 .5 15.5 .5C24 .5 30.5 7 30.5 13.5C30.5 18 27 20.5 23 20.5C19 20.5 17.5 19 18 17.5C19.5 15 19 9 12 9C6 9 2 12 1 13Z" fill="url(#e1)" />
          <path d="M.5 15.5C1 10.5 6 8.6 11 9.3C16 10 18.5 13 18.3 16C14 13 9.5 18 13 24C15.5 28 20 29.5 24 28C18 32.5 9.5 31.5 5 26.5C1.5 23 .3 19 .5 15.5Z" fill="url(#e2)" />
          <path d="M11.5 17C10.5 24 16 31 24.5 27.8C27 26.5 28.5 24.5 29 23.3C24 26 15 25.5 11.5 17Z" fill="#0d4a93" />
        </Svg>
      </TaskSlot>
      <TaskSlot active>
        <Svg w={26} h={30}>
          <path d="M6.5 0H19.5L22 3L24.500 2.800L26 6L25 9.5C24.5 17 23.5 23 20 26L13 30L6 26C2.5 23 1.5 17 1 9.5L0 6L1.5 2.8L4 3Z" fill="#fb3b16" />
          <path d="M8 5.500L13 6.300L18 5.500L22 9.500L20.500 13L21 15.500L17.500 18.500L18 21.500L13 25.500L8 21.500L8.500 18.500L5 15.500L5.500 13L4 9.500Z" fill="#fff" />
          <path d="M7 10.500L11.500 11.800L10.500 13.500H8.500ZM19 10.500L14.500 11.800L15.500 13.500H17.500ZM11.500 14H14.500L15 17L13 18.500L11 17ZM9.500 19.500L13 21L16.500 19.500L16 21L13 23L10 21Z" fill="#fb3b16" />
        </Svg>
      </TaskSlot>
      <TaskSlot>
        <Svg w={30} h={30}>
          <path d="M15 0L22 7L15 13L8 7Z" fill="#f4797b" />
          <path d="M7.2 8L14 14.5L7 22L0 15Z" fill="#7aaeff" />
          <path d="M22.8 8L30 15L22.8 22L16 15Z" fill="#80ca5c" />
          <path d="M15 16L22 23L15 30L8 23Z" fill="#ffdd72" />
          <path d="M10.5 4.5L15 9V22M15 12L20 16" stroke="#151515" strokeWidth="1.6" />
          <circle cx="15" cy="11" r="2.1" fill="#151515" />
          <circle cx="20.5" cy="15.5" r="2.1" fill="#151515" />
          <circle cx="15" cy="21.5" r="2.1" fill="#151515" />
        </Svg>
      </TaskSlot>
      <TaskSlot open>
        <Svg w={26} h={26}>
          <defs>
            <linearGradient id="ij" x1="0" y1="0" x2="1" y2="1">
              <stop offset="0" stopColor="#fc801d" />
              <stop offset=".25" stopColor="#fe2857" />
              <stop offset=".5" stopColor="#6b57ff" />
              <stop offset="1" stopColor="#087cfa" />
            </linearGradient>
          </defs>
          <path d="M1 1L10 0L25 1.5L25.5 24L14 26L0 24.5Z" fill="url(#ij)" />
          <path d="M3.5 3.5H22.5V22.5H3.5Z" fill="#07030c" />
          <path d="M6 6.5H10M8 6.5V13M6 13H10M12 6.5H16V11.5Q16 13.2 14 13.2H12.5M6 18.5H13" stroke="#fff" strokeWidth="1.5" />
        </Svg>
      </TaskSlot>
      <TaskSlot>
        <div className="flex h-[29px] w-[29px] items-center justify-center overflow-hidden rounded-[3px] bg-linear-to-b from-[#2f77a3] to-[#1e4f70]">
          <Svg w={29} h={29}>
            <path d="M4 7C8 3 14 6 17 11C19 15 20 19 25 22L21.5 22.5L22.5 26C18 24 17 19 14.5 18C12 18 13 22 10.5 22.5C9 18 8 13 6 10.5Z" stroke="#d5e6f0" strokeWidth="1.2" />
            <path d="M21 3L24 6L27 5L26 9L22 6Z" fill="#e8f2f8" />
          </Svg>
        </div>
      </TaskSlot>
      <TaskSlot>
        <div className="flex size-[29px] items-center justify-center rounded-full bg-white">
          <SiPostman size={31} color="#ff6c37" className="shrink-0" />
        </div>
      </TaskSlot>
      <TaskSlot>
        <GearLeaf />
      </TaskSlot>
      <TaskSlot>
        <div className="relative size-[30px]">
          <Svg w={30} h={30} vb="0 0 24 24" className="absolute inset-0">
            <path d="M3 2C6 0 9 .5 11.5 1.500C15 0 20 0 22.500 3C24 7 22 12 20.500 15L22.500 16L20 18H16.500C16.500 21 16 23.500 13.500 23.500C10.500 23.500 11 20 10.500 17.500C8 18 6 18.500 4.500 16C2 11 .5 5 3 2Z" fill="#336791" />
          </Svg>
          <SiPostgresql size={30} color="#c3d3e2" className="absolute inset-0" />
        </div>
      </TaskSlot>

      <Svg w={29} h={30} className="ml-[306px]">
        <defs>
          <linearGradient id="moon" x1="0" y1="1" x2="1" y2="0">
            <stop offset="0" stopColor="#e0701d" />
            <stop offset="1" stopColor="#ffc53a" />
          </linearGradient>
        </defs>
        <path d="M0 19C9 22 17 16 19.5 4C26 7 30 15 26.5 22C22 31 6 32 0 19Z" fill="url(#moon)" />
        <circle cx="21.5" cy="8" r="7.5" fill="#c42b1c" />
        <text x="21.5" y="12" textAnchor="middle" fontSize="11" fill="#fff">1</text>
      </Svg>
      <span className="ml-[10px] w-[49px] pt-px text-[17px] tracking-[-0.2px]">34°C</span>
      <span className="w-[70px] pt-px text-[17px] tracking-[-0.2px]">Clear</span>
      <Svg w={17} h={10}>
        <path d="M.8 9L8.5 1.2L16.2 9" stroke="#f0f0f0" strokeWidth="1.5" />
      </Svg>
      <Svg w={21} h={18} className="ml-[11px]">
        <path d="M1 6H4.5L8.5 2V16L4.5 12H1Z" stroke="#f0f0f0" strokeWidth="1.3" />
        <path d="M11 6.5Q12.6 9 11 11.5M13.5 4Q16.8 9 13.5 14M16.3 1.5Q21.5 9 16.3 16.5" stroke="#f0f0f0" strokeWidth="1.3" />
      </Svg>
      <Svg w={19} h={12} className="ml-[10px]">
        <rect x=".7" y=".7" width="16" height="10.6" stroke="#f0f0f0" strokeWidth="1.3" />
        <rect x="2.6" y="2.6" width="12.2" height="6.8" fill="#fff" />
        <path d="M18.2 3.5V8.5" stroke="#f0f0f0" strokeWidth="1.4" />
      </Svg>
      <Svg w={16} h={16} className="mt-[2px] ml-[13px]">
        <path d="M1 15A14 14 0 0 1 15 1" stroke="#777" strokeWidth="1.3" />
        <path d="M4.5 15A10.5 10.5 0 0 1 15 4.8M8 15A7 7 0 0 1 15 8.3M11 15A4 4 0 0 1 15 11.5" stroke="#e0e0e0" strokeWidth="1.3" />
        <circle cx="14" cy="14" r="1.5" fill="#fff" />
      </Svg>
      <Svg w={21} h={21} className="ml-[16px]">
        <path d="M6 14L14 2Q16.5 0 18 2.5L10 15L6 17Z" stroke="#f0f0f0" strokeWidth="1.4" />
        <path d="M6 11C0 11 -1 19 4 19.5C9 20 8 15 13 14C18 13.5 21 10 19 8C17.5 7.5 16 9 14.5 11.5" stroke="#f0f0f0" strokeWidth="1.3" />
      </Svg>
      <div className="ml-[18px] flex w-[66px] flex-col items-center text-[14.5px] leading-[23px] tracking-[-0.25px]">
        <span>8:32 PM</span>
        <span>5/9/2024</span>
      </div>
      <Svg w={20} h={20} className="ml-[23px]">
        <path d="M.7 .7H19.3V16H13L10 19L7 16H.7Z" stroke="#f0f0f0" strokeWidth="1.4" />
      </Svg>
      <Svg w={26} h={26} className="ml-[27px]">
        <defs>
          <linearGradient id="cp1" x1="0" y1="0" x2="0" y2="1">
            <stop offset="0" stopColor="#2a8bf0" />
            <stop offset=".5" stopColor="#2fc0b0" />
            <stop offset="1" stopColor="#f2d23a" />
          </linearGradient>
          <linearGradient id="cp2" x1="0" y1="0" x2="0" y2="1">
            <stop offset="0" stopColor="#b25cf0" />
            <stop offset="1" stopColor="#f26a6a" />
          </linearGradient>
        </defs>
        <path d="M6 0H15Q18 0 19 4L20 7H14L10 18H3Q-1 17 .8 12L3 4Q4 0 6 0Z" fill="url(#cp1)" />
        <path d="M11 0H15Q18 0 19 4L20 7H14Z" fill="#1c4fb8" />
        <path d="M14 7H22Q26 8 25 13L23 19H11Z" fill="url(#cp2)" />
        <rect x="7" y="17" width="19" height="8" rx="1" fill="#ffc21a" />
        <text x="16.5" y="23.9" textAnchor="middle" fontSize="7.6" fontWeight="bold" fill="#1a1400">PRE</text>
      </Svg>
    </footer>
  );
}

export default function App() {
  return (
    <div className="flex h-[991px] w-[1920px] flex-col overflow-hidden bg-[#1c1d1f]">
      <div className="relative flex h-[12px] shrink-0 items-start bg-[#20272b]">
        <div className="ml-[352px] flex h-[6px] w-[1169px] justify-end rounded-b-[6px] bg-[#0e0f14] shadow-[0_0_4px_#0e0f14]">
          <div className="h-[4px] w-[40px] rounded-b-[5px] bg-[#26272b]" />
        </div>
        <div className="ml-[284px] h-[3px] w-[63px] rounded-b-[5px] border-b border-[#3c4a4a]" />
        <div className="absolute top-[12px] left-0 h-[2px] w-[2px] bg-white" />
      </div>
      <Header />
      <Toolbar />
      <div className="flex h-[800px] shrink-0">
        <Sidebar />
        <Canvas />
        <FormatPanel />
      </div>
      <Taskbar />
    </div>
  );
}
